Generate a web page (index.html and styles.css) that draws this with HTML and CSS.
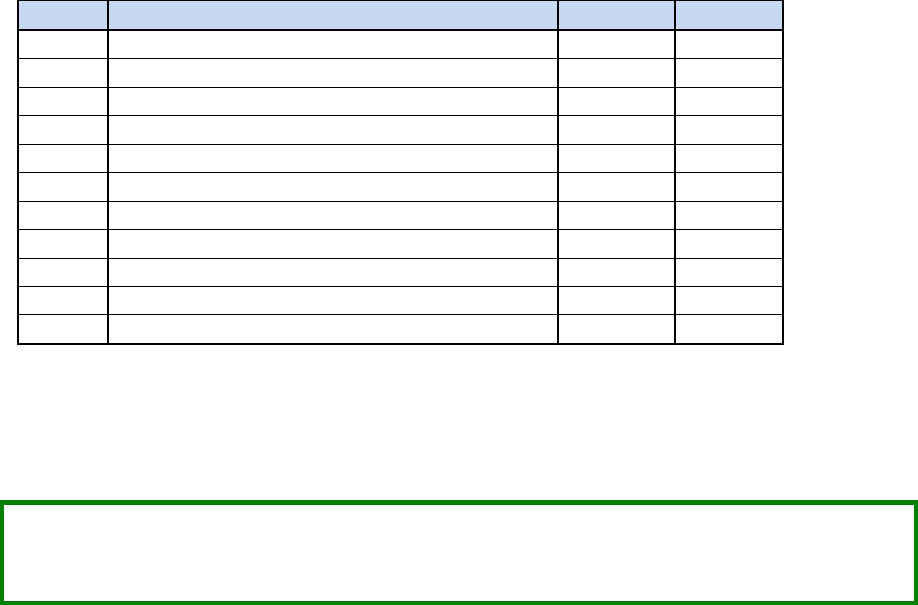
FILE: index.html
```html
<!DOCTYPE html>
<html>
<head>
<meta charset="utf-8">
<link rel="stylesheet" href="styles.css">
</head>
<body>
<table class="grid">
  <thead>
    <tr class="head"><th class="c1"></th><th class="c2"></th><th class="c3"></th><th class="c4"></th></tr>
  </thead>
  <tbody>
    <tr><td class="c1"></td><td class="c2"></td><td class="c3"></td><td class="c4"></td></tr>
    <tr><td class="c1"></td><td class="c2"></td><td class="c3"></td><td class="c4"></td></tr>
    <tr><td class="c1"></td><td class="c2"></td><td class="c3"></td><td class="c4"></td></tr>
    <tr><td class="c1"></td><td class="c2"></td><td class="c3"></td><td class="c4"></td></tr>
    <tr><td class="c1"></td><td class="c2"></td><td class="c3"></td><td class="c4"></td></tr>
    <tr><td class="c1"></td><td class="c2"></td><td class="c3"></td><td class="c4"></td></tr>
    <tr><td class="c1"></td><td class="c2"></td><td class="c3"></td><td class="c4"></td></tr>
    <tr><td class="c1"></td><td class="c2"></td><td class="c3"></td><td class="c4"></td></tr>
    <tr><td class="c1"></td><td class="c2"></td><td class="c3"></td><td class="c4"></td></tr>
    <tr><td class="c1"></td><td class="c2"></td><td class="c3"></td><td class="c4"></td></tr>
    <tr class="last"><td class="c1"></td><td class="c2"></td><td class="c3"></td><td class="c4"></td></tr>
  </tbody>
</table>
<div class="note"></div>
</body>
</html>
```
FILE: styles.css
```css
html, body {
  margin: 0;
  padding: 0;
  overflow: hidden;
  background: #ffffff;
  font-family: "Liberation Sans", Arial, sans-serif;
}

.grid {
  margin-left: 17px;
  border-collapse: separate;
  border-spacing: 0;
  table-layout: fixed;
}

.grid th,
.grid td {
  padding: 0;
  box-sizing: content-box;
  border-right: 2px solid #000;
  border-bottom: 1px solid #000;
  height: 27.45px;
}

.grid .c1 {
  border-left: 2px solid #000;
  width: 88px;
}
.grid .c2 { width: 448px; }
.grid .c3 { width: 115px; }
.grid .c4 { width: 106px; }

.grid .head th {
  background: #c6d9f0;
  border-top: 1px solid #000;
  border-bottom: 2px solid #000;
  height: 28px;
}

.grid .last td {
  border-bottom: 2px solid #000;
}

.note {
  margin-top: 155px;
  height: 96px;
  border-style: solid;
  border-color: #008000;
  border-width: 5px 4px 5px 4px;
}
```
